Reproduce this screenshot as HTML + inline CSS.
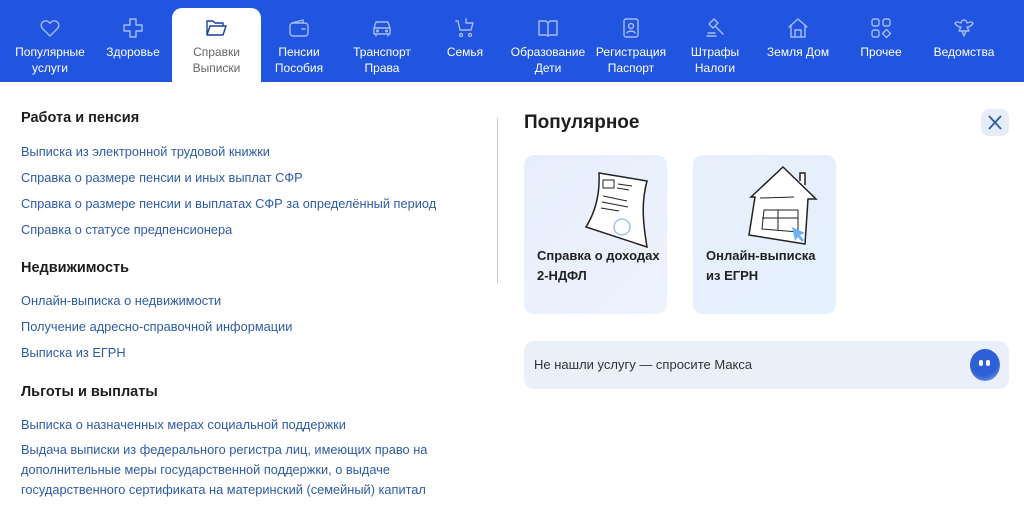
<!DOCTYPE html>
<html><head><meta charset="utf-8"><style>
*{margin:0;padding:0;box-sizing:border-box}
body{width:1024px;height:512px;overflow:hidden;background:#fff;font-family:"Liberation Sans","DejaVu Sans",sans-serif;position:relative}
.nav{position:absolute;left:0;top:0;width:1024px;height:82px;background:#2155e0}
.tab{position:absolute;top:0;width:88px;text-align:center;color:#fff;font-size:12px;line-height:16px}
.tab svg{position:absolute;left:32px;top:16px;width:24px;height:24px;fill:none;stroke:#a6bcf2;stroke-width:1.4;stroke-linecap:round;stroke-linejoin:round}
.tab span{position:absolute;left:0;right:0;top:44px}
.act{background:#fff;top:8px;height:74px;border-radius:10px 10px 0 0;color:#666}
.act svg{top:8px;stroke:#1a3f9e}
.act span{top:36px}
h3{position:absolute;left:21px;font-size:14.5px;font-weight:bold;color:#1d1d1d}
a{position:absolute;left:21px;font-size:12.8px;color:#2e5ba6;text-decoration:none;white-space:nowrap}
.ml{line-height:20px;white-space:normal;width:430px}
.div{position:absolute;left:497px;top:118px;width:1px;height:165px;background:#ccc}
.card{position:absolute;top:155px;width:143px;height:159px;border-radius:10px;background:linear-gradient(135deg,#e7eefb,#edf2fd)}
.card b{position:absolute;left:13px;top:91px;font-size:13px;line-height:20px;color:#222}
</style></head><body>
<div class="nav">
<div class="tab" style="left:6px"><svg viewBox="0 0 24 24"><path d="M12 20l-7.5-7.5a4.5 4.5 0 016.4-6.4L12 7.2l1.1-1.1a4.5 4.5 0 016.4 6.4z"/></svg><span>Популярные<br>услуги</span></div>
<div class="tab" style="left:89px"><svg viewBox="0 0 24 24"><path d="M9 3h6v6h6v6h-6v6H9v-6H3V9h6z"/></svg><span>Здоровье</span></div>
<div class="tab act" style="left:172px;width:89px"><svg viewBox="0 0 24 24"><path d="M3 19V5h6l2 2h8v3M3 19l3-9h16l-3 9z"/></svg><span>Справки<br>Выписки</span></div>
<div class="tab" style="left:255px"><svg viewBox="0 0 24 24"><rect x="3" y="7" width="18" height="13" rx="3"/><path d="M5 7l11-3v3M15 13h3"/></svg><span>Пенсии<br>Пособия</span></div>
<div class="tab" style="left:338px"><svg viewBox="0 0 24 24"><path d="M4 12l2-6h12l2 6v6H4zM4 12h16M6 18v2M18 18v2"/><circle cx="7.5" cy="15" r=".8"/><circle cx="16.5" cy="15" r=".8"/></svg><span>Транспорт<br>Права</span></div>
<div class="tab" style="left:421px"><svg viewBox="0 0 24 24"><path d="M3 5h2l2 9h11l2-7h-7V3M9 14v0"/><circle cx="8" cy="19" r="1.5"/><circle cx="17" cy="19" r="1.5"/></svg><span>Семья</span></div>
<div class="tab" style="left:504px"><svg viewBox="0 0 24 24"><path d="M3 5h7l2 2 2-2h7v14h-7l-2 1-2-1H3zM12 7v13"/></svg><span>Образование<br>Дети</span></div>
<div class="tab" style="left:587px"><svg viewBox="0 0 24 24"><rect x="5" y="3" width="14" height="18" rx="2"/><circle cx="12" cy="10" r="2.5"/><path d="M8 17c1-2.5 7-2.5 8 0"/></svg><span>Регистрация<br>Паспорт</span></div>
<div class="tab" style="left:671px"><svg viewBox="0 0 24 24"><path d="M6 8l5-5 4 4-5 5zM12 10l8 8M4 20h9M5 17h7"/></svg><span>Штрафы<br>Налоги</span></div>
<div class="tab" style="left:754px"><svg viewBox="0 0 24 24"><path d="M3 11l9-8 9 8M5 9v12h14V9M9 21v-7h6v7"/></svg><span>Земля Дом</span></div>
<div class="tab" style="left:837px"><svg viewBox="0 0 24 24"><rect x="3" y="3" width="7" height="7" rx="2"/><rect x="14" y="3" width="7" height="7" rx="2"/><rect x="3" y="14" width="7" height="7" rx="2"/><path d="M17.5 13.5l4 4-4 4-4-4z"/></svg><span>Прочее</span></div>
<div class="tab" style="left:920px"><svg viewBox="0 0 24 24"><path d="M12 4c-2 0-3 2-3 3 0 0-4-2-6 0 1 3 4 4 6 4l-2 4h10l-2-4c2 0 5-1 6-4-2-2-6 0-6 0 0-1-1-3-3-3zM10 15l2 5 2-5"/></svg><span>Ведомства</span></div>
</div>

<h3 style="top:110px">Работа и пенсия</h3>
<a style="top:144px">Выписка из электронной трудовой книжки</a>
<a style="top:170px">Справка о размере пенсии и иных выплат СФР</a>
<a style="top:196px">Справка о размере пенсии и выплатах СФР за определённый период</a>
<a style="top:222px">Справка о статусе предпенсионера</a>
<h3 style="top:260px">Недвижимость</h3>
<a style="top:293px">Онлайн-выписка о недвижимости</a>
<a style="top:319px">Получение адресно-справочной информации</a>
<a style="top:345px">Выписка из ЕГРН</a>
<h3 style="top:384px">Льготы и выплаты</h3>
<a style="top:417px">Выписка о назначенных мерах социальной поддержки</a>
<a class="ml" style="top:440px">Выдача выписки из федерального регистра лиц, имеющих право на дополнительные меры государственной поддержки, о выдаче государственного сертификата на материнский (семейный) капитал</a>

<div class="div"></div>
<div style="position:absolute;left:524px;top:112px;font-size:19px;font-weight:bold;color:#1d1d1d">Популярное</div>
<div style="position:absolute;left:981px;top:109px;width:28px;height:27px;border-radius:8px;background:#e6ecf8"><svg width="28" height="27" viewBox="0 0 28 27"><path d="M8 7l12 13M20 7L8 20" stroke="#2e5ba6" stroke-width="1.8" fill="none"/></svg></div>

<div class="card" style="left:524px">
<svg style="position:absolute;left:60px;top:14px" width="70" height="80" viewBox="0 0 70 80"><path d="M15 4l48 8c-6 22-4 42 0 66L2 58c10-16 14-34 13-54z" fill="#fff" stroke="#222" stroke-width="1.5"/><rect x="19" y="11" width="11" height="8" fill="none" stroke="#222"/><path d="M34 15l14 2M33 19l12 2M19 27l24 5M18 33l26 5M17 39l18 3" stroke="#222"/><circle cx="38" cy="58" r="8" fill="none" stroke="#9cc3ef" stroke-width="1.5"/></svg>
<b>Справка о доходах<br>2-НДФЛ</b></div>
<div class="card" style="left:693px;background:linear-gradient(135deg,#e8effb,#e3f1fc)">
<svg style="position:absolute;left:55px;top:10px" width="75" height="80" viewBox="0 0 75 80"><path d="M3 32L35 2l33 32h-8l-3 45L1 70l6-38z" fill="#fff" stroke="#222" stroke-width="1.5"/><path d="M52 16V8h5v12" fill="#fff" stroke="#222" stroke-width="1.5"/><path d="M12 33l34-1M16 45l34 0v22l-36-3zM14 53l36 0M30 45v20" fill="none" stroke="#222"/><path d="M44 62l13 6-5 2 4 5-2 2-4-5-3 4z" fill="#6fb2ef"/></svg>
<b>Онлайн-выписка<br>из ЕГРН</b></div>

<div style="position:absolute;left:524px;top:341px;width:485px;height:48px;border-radius:10px;background:#ebeffa">
<div style="position:absolute;left:10px;top:16px;font-size:13px;color:#333">Не нашли услугу — спросите Макса</div>
<div style="position:absolute;left:446px;top:8px;width:30px;height:32px;border-radius:50%;background:radial-gradient(circle at 45% 40%,#2d5fd6 55%,#9cb8e8)"><div style="position:absolute;left:9px;top:11px;width:4px;height:6px;background:#fff;border-radius:2px"></div><div style="position:absolute;left:16px;top:11px;width:4px;height:6px;background:#fff;border-radius:2px"></div></div>
</div>
</body></html>
